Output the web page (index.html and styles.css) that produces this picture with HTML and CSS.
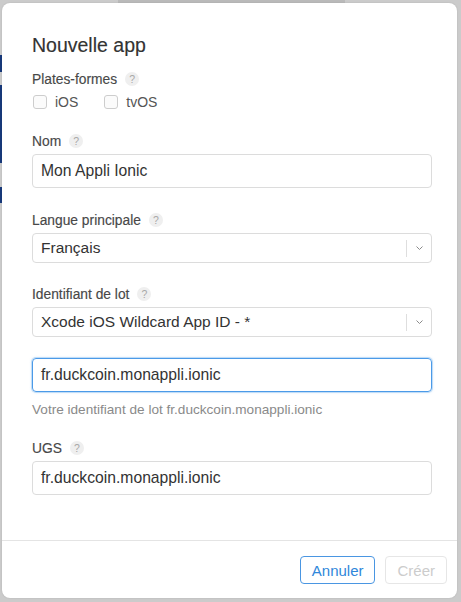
FILE: index.html
```html
<!DOCTYPE html>
<html lang="fr">
<head>
<meta charset="utf-8">
<title>Nouvelle app</title>
<link rel="stylesheet" href="styles.css">
</head>
<body>
<div class="modal">
  <div class="modal-body">
    <h1 class="title">Nouvelle app</h1>

    <div class="group group-platforms">
      <div class="label">Plates-formes <span class="help">?</span></div>
      <div class="checks">
        <label class="check"><span class="box"></span><span class="check-text">iOS</span></label>
        <label class="check"><span class="box"></span><span class="check-text">tvOS</span></label>
      </div>
    </div>

    <div class="group group-name">
      <div class="label">Nom <span class="help">?</span></div>
      <div class="input">Mon Appli Ionic</div>
    </div>

    <div class="group group-lang">
      <div class="label">Langue principale <span class="help">?</span></div>
      <div class="select">
        <span class="select-text">Français</span>
        <span class="select-arrow"><svg width="7" height="4" viewBox="0 0 7 4"><polyline points="0.5,0.5 3.5,3.5 6.5,0.5" fill="none" stroke="#8a8a8a" stroke-width="1"/></svg></span>
      </div>
    </div>

    <div class="group group-bundle">
      <div class="label">Identifiant de lot <span class="help">?</span></div>
      <div class="select">
        <span class="select-text">Xcode iOS Wildcard App ID - *</span>
        <span class="select-arrow"><svg width="7" height="4" viewBox="0 0 7 4"><polyline points="0.5,0.5 3.5,3.5 6.5,0.5" fill="none" stroke="#8a8a8a" stroke-width="1"/></svg></span>
      </div>
      <div class="input input-focus">fr.duckcoin.monappli.ionic</div>
      <div class="hint">Votre identifiant de lot fr.duckcoin.monappli.ionic</div>
    </div>

    <div class="group group-sku">
      <div class="label">UGS <span class="help">?</span></div>
      <div class="input">fr.duckcoin.monappli.ionic</div>
    </div>
  </div>

  <div class="modal-footer">
    <button class="btn btn-cancel">Annuler</button>
    <button class="btn btn-disabled">Créer</button>
  </div>
</div>
</body>
</html>
```

FILE: styles.css
```css
html, body {
  margin: 0;
  padding: 0;
}

body {
  width: 461px;
  height: 602px;
  overflow: hidden;
  font-family: "Liberation Sans", Arial, sans-serif;
  background:
    linear-gradient(#17397b, #17397b) 0 55px / 2px 17px no-repeat,
    linear-gradient(#17397b, #17397b) 0 85px / 2px 78px no-repeat,
    linear-gradient(#17397b, #17397b) 0 187px / 2px 16px no-repeat,
    linear-gradient(#bababa, #bababa) 118px 0 / 227px 3px no-repeat,
    #cbcbcb;
  display: flex;
  align-items: flex-start;
}

.modal {
  margin: 3px 4px 4px 2px;
  width: 455px;
  height: 595px;
  background: #ffffff;
  border-radius: 8px;
  display: flex;
  flex-direction: column;
  box-shadow: 0 0 2px rgba(0, 0, 0, 0.12);
}

.modal-body {
  flex: 1;
  padding: 30px 25px 0 30px;
}

.title {
  margin: 0;
  font-size: 19.5px;
  line-height: 24px;
  font-weight: normal;
  color: #333333;
  -webkit-text-stroke: 0.15px #333333;
}

.group-platforms { margin-top: 13px; }
.group-name { margin-top: 20px; }
.group-lang { margin-top: 23px; }
.group-bundle { margin-top: 22px; }
.group-sku { margin-top: 20px; }

.label {
  display: flex;
  align-items: center;
  height: 18px;
  font-size: 13.8px;
  color: #484848;
  -webkit-text-stroke: 0.15px #484848;
  margin-bottom: 4px;
}

.help {
  margin-left: 8px;
  width: 14px;
  height: 14px;
  border-radius: 50%;
  background: #efefef;
  color: #a8a8a8;
  font-size: 10.5px;
  line-height: 14px;
  text-align: center;
  -webkit-text-stroke: 0;
}

.checks {
  display: flex;
  height: 20px;
  align-items: center;
}

.check {
  display: flex;
  align-items: center;
  margin-right: 25px;
}

.box {
  width: 12px;
  height: 12px;
  margin-left: 1px;
  border: 1px solid #cdcdcd;
  border-radius: 3px;
  background: #fbfbfb;
}

.check-text {
  margin-left: 8px;
  font-size: 14px;
  color: #555555;
}

.input {
  box-sizing: border-box;
  height: 34px;
  border: 1px solid #dcdcdc;
  border-radius: 4px;
  padding: 0 8px;
  display: flex;
  align-items: center;
  font-size: 15.7px;
  color: #333333;
}

.input-focus {
  margin-top: 21px;
  border-color: #4b9ae8;
  box-shadow: 0 0 0 1px rgba(75, 154, 232, 0.25), 0 0 3px rgba(75, 154, 232, 0.35);
}

.select {
  box-sizing: border-box;
  height: 30px;
  border: 1px solid #dcdcdc;
  border-radius: 4px;
  display: flex;
  align-items: center;
  font-size: 15.5px;
  color: #333333;
}

.select-text {
  flex: 1;
  padding-left: 8px;
}

.select-arrow {
  width: 24px;
  height: 17px;
  border-left: 1px solid #dedede;
  display: flex;
  align-items: center;
  justify-content: center;
}

.hint {
  margin-top: 9px;
  height: 18px;
  line-height: 18px;
  font-size: 13.6px;
  color: #8a8a8a;
}

.modal-footer {
  border-top: 1px solid #e4e4e4;
  padding: 15px 10px 14px;
  display: flex;
  justify-content: flex-end;
  gap: 10px;
}

.btn {
  box-sizing: border-box;
  height: 28px;
  padding: 0 11px;
  border-radius: 4px;
  background: #ffffff;
  font-family: "Liberation Sans", Arial, sans-serif;
  font-size: 15px;
}

.btn-cancel {
  border: 1px solid #4a96e2;
  color: #2f87da;
}

.btn-disabled {
  border: 1px solid #e6e6e6;
  color: #cccccc;
}
```
